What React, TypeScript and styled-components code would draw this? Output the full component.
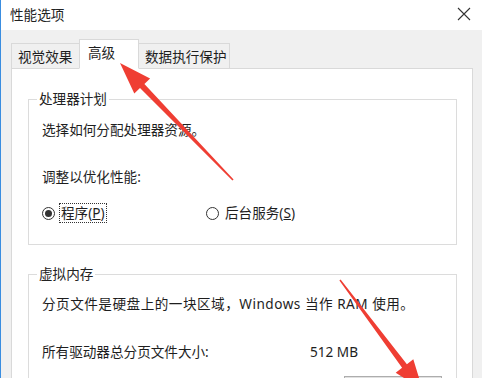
import React from 'react';
import styled, { createGlobalStyle } from 'styled-components';

const GlobalStyle = createGlobalStyle`
  html, body {
    margin: 0;
    padding: 0;
    background: #f0f0f0;
  }
  body {
    font-family: "Noto Sans", "Noto Sans CJK SC", sans-serif;
    font-size: 13.6px;
    color: #1e1e1e;
  }
`;

const Window = styled.div`
  position: relative;
  width: 482px;
  height: 378px;
  overflow: hidden;
  border-left: 1px solid #3a8de0;
  box-sizing: border-box;
  background: #f0f0f0;
`;

const TitleBar = styled.div`
  height: 30px;
  background: #fff;
  display: flex;
  align-items: center;
  justify-content: space-between;
  padding: 0 9px 3px 9px;
  box-sizing: border-box;
`;

const Title = styled.span`
  color: #222;
`;

const CloseIcon = styled.svg`
  width: 14px;
  height: 14px;
  margin-right: 2px;
`;

const Body = styled.div`
  padding: 10px 9px 0 10px;
`;

const TabRow = styled.div`
  display: flex;
  align-items: flex-end;
  height: 29px;
  position: relative;
  z-index: 1;
  margin-bottom: -1px;
`;

const Tab = styled.div<{ $active?: boolean; $w: number }>`
  width: ${({ $w }) => $w}px;
  box-sizing: border-box;
  height: ${({ $active }) => ($active ? 30 : 26)}px;
  padding: ${({ $active }) => ($active ? '4px 0 0 8px' : '4px 0 0 6px')};
  background: ${({ $active }) => ($active ? '#fff' : '#f0f0f0')};
  border: 1px solid #d9d9d9;
  border-bottom: ${({ $active }) => ($active ? '1px solid #fff' : '1px solid #d9d9d9')};
  margin-left: ${({ $active }) => ($active ? '-1px' : '0')};
  margin-right: ${({ $active }) => ($active ? '-1px' : '0')};
  position: relative;
  z-index: ${({ $active }) => ($active ? 2 : 1)};
  line-height: 18px;
  white-space: nowrap;
`;

const Panel = styled.div`
  background: #fff;
  border: 1px solid #d9d9d9;
  width: 462px;
  box-sizing: border-box;
  height: 320px;
  padding: 21px 15px 0 16px;
`;

const GroupBox = styled.fieldset<{ $gap?: number }>`
  margin: ${({ $gap }) => $gap ?? 0}px 0 0 0;
  padding: 0 12px 21px 13px;
  border: 1px solid #dcdcdc;
  min-width: 0;
`;

const Legend = styled.legend`
  padding: 0 2px;
  margin-left: -5px;
  line-height: 18px;
  color: #222;
`;

const Line = styled.div<{ $top: number; $spacing?: number }>`
  margin-top: ${({ $top }) => $top}px;
  line-height: 18px;
  white-space: nowrap;
  letter-spacing: ${({ $spacing }) => $spacing ?? 0}px;
`;

const RadioRow = styled.div`
  margin-top: 17px;
  display: grid;
  grid-template-columns: 164px auto;
  align-items: center;
  height: 20px;
`;

const RadioItem = styled.label`
  display: flex;
  align-items: center;
  gap: 4px;
`;

const RadioCircle = styled.span<{ $checked?: boolean }>`
  width: 13px;
  height: 13px;
  border-radius: 50%;
  border: 1px solid #333;
  box-sizing: border-box;
  display: flex;
  align-items: center;
  justify-content: center;
  background: #fff;
  &::after {
    content: '';
    width: 7px;
    height: 7px;
    border-radius: 50%;
    background: ${({ $checked }) => ($checked ? '#333' : 'transparent')};
  }
`;

const RadioLabel = styled.span<{ $focus?: boolean }>`
  line-height: 18px;
  padding: 0 1px;
  border: 1px dotted ${({ $focus }) => ($focus ? '#333' : 'transparent')};
`;

const Key = styled.span`
  text-decoration: underline;
`;

const SizeRow = styled.div`
  margin-top: 30px;
  display: grid;
  grid-template-columns: 268px auto;
  line-height: 18px;
`;

const ButtonRow = styled.div`
  margin-top: 15px;
  display: flex;
  justify-content: flex-end;
  padding-right: 2px;
`;

const Button = styled.div`
  width: 98px;
  height: 23px;
  background: #e1e1e1;
  border: 1px solid #adadad;
  box-sizing: border-box;
`;

const Arrows = styled.svg`
  position: absolute;
  left: 0;
  top: 0;
  pointer-events: none;
  z-index: 5;
`;

export default function App() {
  return (
    <>
      <GlobalStyle />
      <Window>
        <TitleBar>
          <Title>性能选项</Title>
          <CloseIcon viewBox="0 0 14 14">
            <path d="M1 1 L13 13 M13 1 L1 13" stroke="#333" strokeWidth="1.1" />
          </CloseIcon>
        </TitleBar>
        <Body>
          <TabRow>
            <Tab $w={69}>视觉效果</Tab>
            <Tab $w={60} $active>高级</Tab>
            <Tab $w={92}>数据执行保护</Tab>
          </TabRow>
          <Panel>
            <GroupBox>
              <Legend>处理器计划</Legend>
              <Line $top={13}>选择如何分配处理器资源。</Line>
              <Line $top={29}>调整以优化性能:</Line>
              <RadioRow>
                <RadioItem>
                  <RadioCircle $checked />
                  <RadioLabel $focus>
                    程序(<Key>P</Key>)
                  </RadioLabel>
                </RadioItem>
                <RadioItem>
                  <RadioCircle />
                  <RadioLabel>
                    后台服务(<Key>S</Key>)
                  </RadioLabel>
                </RadioItem>
              </RadioRow>
            </GroupBox>
            <GroupBox $gap={20}>
              <Legend>虚拟内存</Legend>
              <Line $top={12} $spacing={0.5}>
                分页文件是硬盘上的一块区域，Windows 当作 RAM 使用。
              </Line>
              <SizeRow>
                <span>所有驱动器总分页文件大小:</span>
                <span>512 MB</span>
              </SizeRow>
              <ButtonRow>
                <Button />
              </ButtonRow>
            </GroupBox>
          </Panel>
        </Body>
        <Arrows width="482" height="378" viewBox="0 0 482 378">
          <polygon
            points="119,63 149.1,78.4 143.4,83.9 232.6,179.4 231.4,180.6 139,88.1 133.3,93.6"
            fill="#ef3e33"
          />
          <polygon
            points="421.7,389.9 412.3,359.3 405.9,364.2 339.6,279.5 338.4,280.5 401.1,367.8 394.7,372.7"
            fill="#ef3e33"
          />
        </Arrows>
      </Window>
    </>
  );
}
